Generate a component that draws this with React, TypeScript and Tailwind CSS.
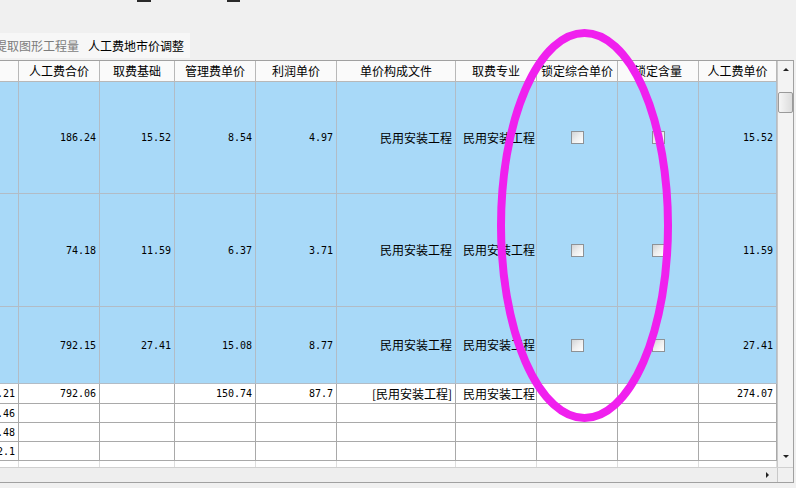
const COLS = "grid grid-cols-[19px_81px_75px_81px_81px_119px_81px_81px_81px_78px]";
const CJK = "font-['Noto_Sans_CJK_SC','Liberation_Sans',sans-serif]";
const MONO = "font-['DejaVu_Sans_Mono','Liberation_Mono',monospace]";

const headers = ["", "人工费合价", "取费基础", "管理费单价", "利润单价", "单价构成文件", "取费专业", "锁定综合单价", "锁定含量", "人工费单价"];

type Row = {
  h: string;
  blue: boolean;
  first: string;
  purple?: boolean;
  v: string[];
  file: string;
  major: string;
  lock: boolean;
  unit: string;
};

const rows: Row[] = [
  { h: "h-[112px]", blue: true, first: "", v: ["186.24", "15.52", "8.54", "4.97"], file: "民用安装工程", major: "民用安装工程", lock: true, unit: "15.52" },
  { h: "h-[113px]", blue: true, first: "", v: ["74.18", "11.59", "6.37", "3.71"], file: "民用安装工程", major: "民用安装工程", lock: true, unit: "11.59" },
  { h: "h-[77px]", blue: true, first: "", v: ["792.15", "27.41", "15.08", "8.77"], file: "民用安装工程", major: "民用安装工程", lock: true, unit: "27.41" },
  { h: "h-[20px]", blue: false, first: "1.21", v: ["792.06", "", "150.74", "87.7"], file: "[民用安装工程]", major: "民用安装工程", lock: false, unit: "274.07" },
  { h: "h-[19px]", blue: false, first: "3.46", purple: true, v: ["", "", "", ""], file: "", major: "", lock: false, unit: "" },
  { h: "h-[19px]", blue: false, first: "5.48", purple: true, v: ["", "", "", ""], file: "", major: "", lock: false, unit: "" },
  { h: "h-[19px]", blue: false, first: "2.1", purple: true, v: ["", "", "", ""], file: "", major: "", lock: false, unit: "" },
];

function Check() {
  return (
    <span className="w-[13px] h-[13px] border border-[#8e9296] bg-linear-to-br from-[#d2d4d6] via-[#eeeeee] to-[#ffffff]" />
  );
}

function GridRow({ r }: { r: Row }) {
  const line = r.blue ? "border-[#b2bcc6]" : "border-[#a9a9a9]";
  const bg = r.blue ? "bg-[#a8d9f8]" : "bg-white";
  const cell = `flex items-center overflow-hidden whitespace-nowrap border-r border-b ${line}`;
  const num = `${cell} justify-end pr-[3px] ${MONO} text-[10px] text-black`;
  return (
    <div className={`${COLS} ${r.h} ${bg}`}>
      <div className={`${num} pr-[2px] ${r.purple ? "text-[#800080]" : ""}`}>{r.first}</div>
      {r.v.map((x, i) => (
        <div key={i} className={num}>{x}</div>
      ))}
      <div className={`${cell} justify-end pr-[3px] ${CJK} text-[12px] text-black`}>{r.file}</div>
      <div className={`${cell} justify-start pl-[7px] ${CJK} text-[12px] text-black`}>{r.major}</div>
      <div className={`${cell} justify-center`}>{r.lock && <Check />}</div>
      <div className={`${cell} justify-center`}>{r.lock && <Check />}</div>
      <div className={`${num} pr-[1px]`}>{r.unit}</div>
    </div>
  );
}

export default function App() {
  return (
    <div className="relative w-[796px] h-[488px] overflow-hidden bg-[#f0f0f0] flex flex-col">
      {/* top remnants */}
      <div className="h-[33px] flex items-start">
        <div className="ml-[137px] w-[14px] h-[2px] bg-[#2a2a2a]" />
        <div className="ml-[76px] w-[13px] h-[2px] bg-[#2a2a2a]" />
      </div>

      {/* tabs */}
      <div className={`h-[25px] w-[190px] bg-[#f7f7f7] flex items-center ${CJK} text-[12px]`}>
        <span className="ml-[-5px] text-[#7c7c7c]">提取图形工程量</span>
        <span className="ml-[9px] text-black">人工费地市价调整</span>
      </div>
      <div className="h-[2px]" />

      {/* grid */}
      <div className="w-[794px] h-[423px] border-t border-r border-b border-[#a0a0a0] flex flex-col">
        <div className="flex flex-1">
          <div className="w-[777px] bg-white flex flex-col">
            <div className={`${COLS} h-[21px] bg-[#fafafa]`}>
              {headers.map((t, i) => (
                <div key={i} className={`flex items-center justify-center whitespace-nowrap overflow-hidden border-r border-b border-[#b8b8b8] ${CJK} text-[12px] text-black`}>
                  {t}
                </div>
              ))}
            </div>
            {rows.map((r, i) => (
              <GridRow key={i} r={r} />
            ))}
            <div className={`${COLS} h-[6px]`}>
              {headers.map((_, i) => (
                <div key={i} className="border-r border-[#dedede]" />
              ))}
            </div>
          </div>
          {/* vertical scrollbar */}
          <div className="w-[16px] bg-[#f3f3f3] border-l border-[#c8c8c8] flex flex-col items-center">
            <div className="h-[17px] flex items-center justify-center">
              <span className="w-0 h-0 border-l-[3px] border-r-[3px] border-b-[3px] border-l-transparent border-r-transparent border-b-[#222]" />
            </div>
            <div className="h-[14px]" />
            <div className="w-[15px] h-[21px] rounded-[2px] border border-[#9a9a9a] bg-linear-to-r from-[#f6f6f6] to-[#dcdcdc]" />
            <div className="flex-1" />
            <div className="h-[17px] flex items-center justify-center mb-[2px]">
              <span className="w-0 h-0 border-l-[3px] border-r-[3px] border-t-[3px] border-l-transparent border-r-transparent border-t-[#222]" />
            </div>
          </div>
        </div>
        {/* horizontal scrollbar */}
        <div className="h-[16px] flex border-t border-[#d0d0d0]">
          <div className="w-[777px] bg-[#eeeeee] flex items-center justify-end pr-[8px]">
            <span className="w-0 h-0 border-t-[3px] border-b-[3px] border-l-[3px] border-t-transparent border-b-transparent border-l-[#222]" />
          </div>
          <div className="flex-1 bg-[#f0f0f0] border-l border-[#c8c8c8]" />
        </div>
      </div>

      {/* hand-drawn highlight */}
      <svg className="absolute inset-0 pointer-events-none" width="796" height="488" viewBox="0 0 796 488">
        <ellipse cx="584.5" cy="225.5" rx="83.5" ry="192.5" fill="none" stroke="#f020ee" strokeWidth="8" />
      </svg>
    </div>
  );
}
